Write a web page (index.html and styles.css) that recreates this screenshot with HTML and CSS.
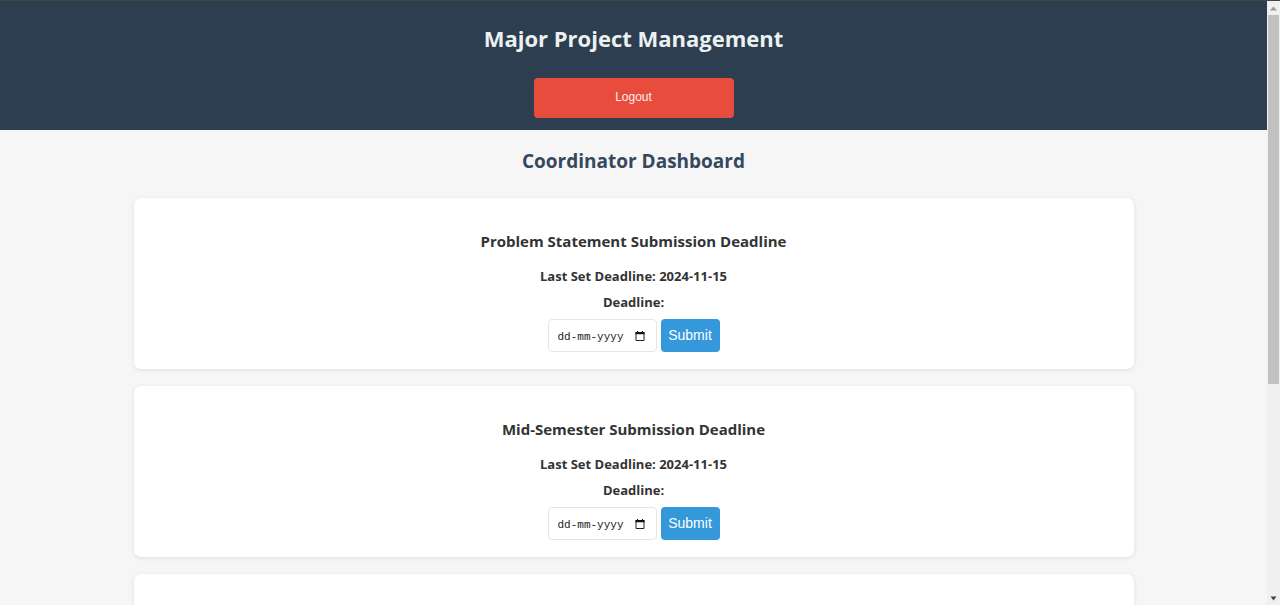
FILE: index.html
```html
<!DOCTYPE html>
<html lang="en">
<head>
<meta charset="utf-8">
<title>Major Project Management</title>
<link rel="stylesheet" href="styles.css">
</head>
<body>
<div class="viewport">
  <div class="page">
    <header class="header">
      <h1 class="title">Major Project Management</h1>
      <button class="logout" type="button">Logout</button>
    </header>
    <main class="dashboard">
      <h2 class="heading">Coordinator Dashboard</h2>
      <section class="card">
        <h3 class="card-title">Problem Statement Submission Deadline</h3>
        <p class="last-set">Last Set Deadline: 2024-11-15</p>
        <form class="form">
          <label class="label" for="problem-date">Deadline:</label>
          <div class="controls">
            <div class="date">
              <input class="date-input" id="problem-date" type="text" placeholder="dd-mm-yyyy">
              <button class="picker" type="button" aria-label="Choose date"><svg class="calendar" viewBox="0 0 10 11"><path d="M1 1.500h8v8H1z" fill="none" stroke="#222"/><path d="M.5 1h9v2.200h-9zM2 0h1v2H2zM7 0h1v2H7z" fill="#111"/></svg></button>
            </div>
            <button class="submit" type="button">Submit</button>
          </div>
        </form>
      </section>
      <section class="card">
        <h3 class="card-title">Mid-Semester Submission Deadline</h3>
        <p class="last-set">Last Set Deadline: 2024-11-15</p>
        <form class="form">
          <label class="label" for="mid-date">Deadline:</label>
          <div class="controls">
            <div class="date">
              <input class="date-input" id="mid-date" type="text" placeholder="dd-mm-yyyy">
              <button class="picker" type="button" aria-label="Choose date"><svg class="calendar" viewBox="0 0 10 11"><path d="M1 1.500h8v8H1z" fill="none" stroke="#222"/><path d="M.5 1h9v2.200h-9zM2 0h1v2H2zM7 0h1v2H7z" fill="#111"/></svg></button>
            </div>
            <button class="submit" type="button">Submit</button>
          </div>
        </form>
      </section>
      <section class="card card-next"></section>
    </main>
  </div>
  <div class="scrollbar" aria-hidden="true">
    <svg class="arrow" viewBox="0 0 13 13"><path d="M6.500 5L10 9H3z" fill="#999"/></svg>
    <div class="track"><div class="thumb"></div></div>
    <svg class="arrow" viewBox="0 0 13 13"><path d="M3.500 5h6l-3 4z" fill="#444"/></svg>
  </div>
</div>
</body>
</html>
```
FILE: styles.css
```css
* {
  box-sizing: border-box;
}

body {
  margin: 0;
  background: #f6f6f6;
  color: #333;
  font-family: "Open Sans", "Noto Sans", sans-serif;
}

h1, h2, h3, p {
  margin: 0;
}

button, input {
  font-family: "Liberation Sans", Arial, sans-serif;
}

.viewport {
  display: flex;
  height: 100vh;
  overflow: hidden;
  border-top: 1px solid #444;
}

.page {
  flex: 1;
  min-width: 0;
  overflow: hidden;
}

.header {
  display: flex;
  flex-direction: column;
  align-items: center;
  gap: 25px;
  padding: 23px 16px 12px;
  background: #2d3e50;
  text-align: center;
}

.title {
  color: #ecf0f1;
  font-size: 22px;
  font-weight: 700;
  line-height: 29px;
}

.logout {
  width: 200px;
  height: 40px;
  padding: 0 0 2px;
  border: 0;
  border-radius: 4px;
  background: #e84c3d;
  color: #fbeeec;
  font-size: 12px;
}

.dashboard {
  display: flex;
  flex-direction: column;
  gap: 17px;
  max-width: 1000px;
  margin: 0 auto;
  padding-top: 18px;
  text-align: center;
}

.heading {
  margin-bottom: 6px;
  color: #34495e;
  font-size: 19px;
  line-height: 27px;
}

.card {
  padding: 33px 16px 17px;
  border-radius: 7px;
  background: #fff;
  box-shadow: 0 1px 4px rgba(0, 0, 0, 0.1);
}

.card-next {
  height: 171px;
}

.card-title {
  margin-bottom: 14px;
  font-size: 15px;
  font-weight: 700;
  line-height: 21px;
}

.last-set, .label {
  display: block;
  font-size: 13px;
  font-weight: 700;
  line-height: 20px;
}

.last-set {
  margin-bottom: 6px;
}

.controls {
  display: flex;
  justify-content: center;
  gap: 4px;
  margin-top: 7px;
}

.date {
  display: flex;
  align-items: center;
  width: 109px;
  height: 33px;
  padding: 2px 11px 0 9px;
  border: 1px solid #e6e6e6;
  border-radius: 4px;
  background: #fff;
}

.date-input {
  flex: 1;
  min-width: 0;
  padding: 0;
  border: 0;
  outline: 0;
  background: none;
  color: #222;
  font-family: "Liberation Mono", monospace;
  font-size: 11px;
}

.date-input::placeholder {
  color: #222;
}

.picker {
  display: flex;
  padding: 0;
  border: 0;
  background: none;
}

.calendar {
  width: 10px;
  height: 11px;
}

.submit {
  width: 59px;
  height: 33px;
  padding: 0 0 2px;
  border: 0;
  border-radius: 4px;
  background: #3498db;
  color: #fff;
  font-size: 14px;
}

.scrollbar {
  display: flex;
  flex-direction: column;
  width: 13px;
  background: #f0f0f0;
}

.arrow {
  width: 13px;
  height: 14px;
}

.track {
  flex: 1;
  padding: 0 1px;
}

.thumb {
  height: 64%;
  background: #c1c1c1;
}
```
